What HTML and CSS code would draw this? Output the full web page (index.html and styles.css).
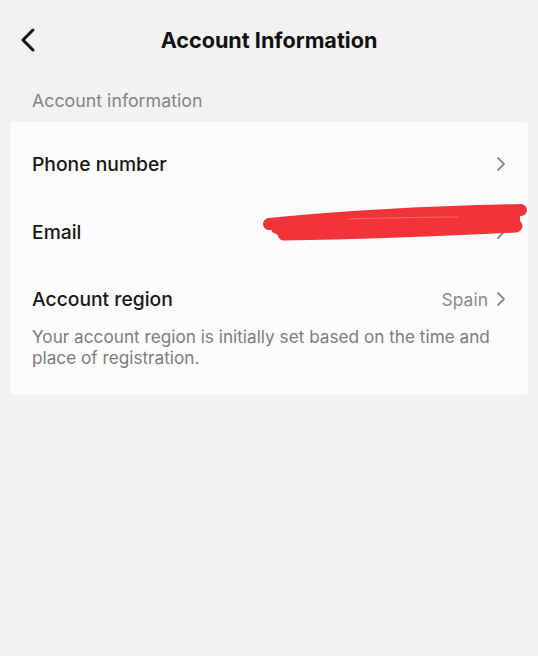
FILE: index.html
```html
<!DOCTYPE html>
<html>
<head>
<meta charset="utf-8">
<link rel="stylesheet" href="styles.css">
</head>
<body>
<header class="topbar">
  <svg class="back" width="16" height="24" viewBox="0 0 16 24"><path d="M13 2 L3 12 L13 22" fill="none" stroke="#111" stroke-width="3" stroke-linecap="round" stroke-linejoin="round"/></svg>
  <h1 class="title">Account Information</h1>
</header>
<div class="section-label">Account information</div>
<div class="card">
  <div class="row">
    <span class="row-label">Phone number</span>
    <span class="row-right"><svg class="chev" width="10" height="16" viewBox="0 0 10 16"><path d="M2 2 L8 8 L2 14" fill="none" stroke="#8a8a8a" stroke-width="1.8" stroke-linecap="round" stroke-linejoin="round"/></svg></span>
  </div>
  <div class="row email-row">
    <span class="row-label">Email</span>
    <span class="row-right"><svg class="chev" width="10" height="16" viewBox="0 0 10 16"><path d="M2 2 L8 8 L2 14" fill="none" stroke="#8a8a8a" stroke-width="1.8" stroke-linecap="round" stroke-linejoin="round"/></svg></span>
    <svg class="scribble" width="272" height="44" viewBox="0 0 272 44">
      <path d="M12 22 C 30 17, 60 14, 120 10 C 180 6, 230 5, 262 8 L 262 26 C 200 30, 120 34, 30 38 L 14 30 Z" fill="#f2333a"/>
      <path d="M11 22 C 70 16, 160 10, 263 8" fill="none" stroke="#f2333a" stroke-width="12" stroke-linecap="round"/>
      <path d="M26 32 C 100 31, 180 28, 258 24" fill="none" stroke="#f2333a" stroke-width="13" stroke-linecap="round"/>
      <path d="M90 17 C 130 16, 170 15, 200 15" fill="none" stroke="#f86a6e" stroke-width="1" stroke-linecap="round"/>
    </svg>
  </div>
  <div class="row region-row">
    <span class="row-label">Account region</span>
    <span class="row-right"><span class="value">Spain</span><svg class="chev" width="10" height="16" viewBox="0 0 10 16"><path d="M2 2 L8 8 L2 14" fill="none" stroke="#8a8a8a" stroke-width="1.8" stroke-linecap="round" stroke-linejoin="round"/></svg></span>
  </div>
  <p class="desc">Your account region is initially set based on the time and place of registration.</p>
</div>
</body>
</html>
```
FILE: styles.css
```css
html, body {
  margin: 0;
  padding: 0;
  background: #f2f2f2;
  font-family: Inter, "Noto Sans", "Liberation Sans", sans-serif;
  color: #161616;
}
body {
  width: 538px;
  height: 656px;
  overflow: hidden;
}
.topbar {
  position: relative;
  height: 80px;
  display: flex;
  align-items: center;
  justify-content: center;
}
.back {
  position: absolute;
  left: 20px;
  top: 28px;
}
.title {
  margin: 0;
  font-size: 21.6px;
  font-weight: 700;
  color: #111;
}
.section-label {
  padding: 10px 32px 0;
  height: 32px;
  font-size: 17.8px;
  color: #838383;
}
.card {
  margin: 0 10px;
  background: #fcfcfc;
  border-radius: 4px;
  padding: 8px 22px 27px;
  position: relative;
}
.row {
  height: 68px;
  display: flex;
  align-items: center;
  justify-content: space-between;
  position: relative;
}
.row-label {
  font-size: 19.3px;
  font-weight: 500;
  color: #161616;
}
.row-right {
  display: flex;
  align-items: center;
  gap: 8px;
  color: #8a8a8a;
  font-size: 17.5px;
}
.chev {
  display: block;
}
.scribble {
  position: absolute;
  left: 226px;
  top: 4px;
}
.region-row {
  height: 66px;
}
.desc {
  margin: -6px 0 0;
  font-size: 17.2px;
  line-height: 21px;
  color: #7d7d7d;
}
```
